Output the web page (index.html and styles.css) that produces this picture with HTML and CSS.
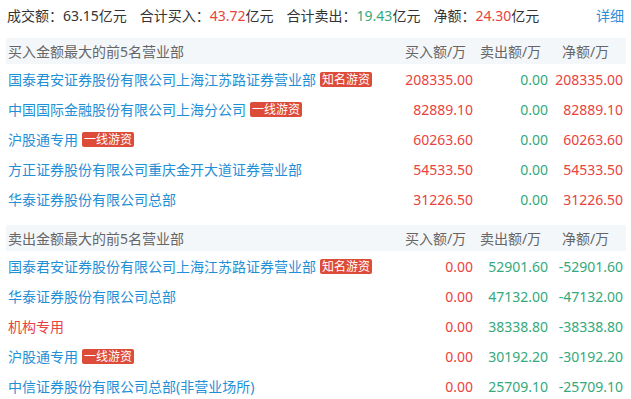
FILE: index.html
```html
<!DOCTYPE html>
<html lang="zh">
<head>
<meta charset="utf-8">
<link rel="stylesheet" href="styles.css">
</head>
<body>
<div class="page">
  <div class="summary">
    <span class="item">成交额：<span class="val">63.15</span>亿元</span>
    <span class="item">合计买入：<span class="red">43.72</span>亿元</span>
    <span class="item">合计卖出：<span class="green">19.43</span>亿元</span>
    <span class="item">净额：<span class="red">24.30</span>亿元</span>
    <a class="detail">详细</a>
  </div>

  <div class="section">
    <div class="row head">
      <div class="name">买入金额最大的前5名营业部</div>
      <div class="col">买入额/万</div>
      <div class="col">卖出额/万</div>
      <div class="col">净额/万</div>
    </div>
    <div class="row">
      <div class="name blue">国泰君安证券股份有限公司上海江苏路证券营业部<span class="tag">知名游资</span></div>
      <div class="num red">208335.00</div>
      <div class="num green">0.00</div>
      <div class="num red">208335.00</div>
    </div>
    <div class="row">
      <div class="name blue">中国国际金融股份有限公司上海分公司<span class="tag">一线游资</span></div>
      <div class="num red">82889.10</div>
      <div class="num green">0.00</div>
      <div class="num red">82889.10</div>
    </div>
    <div class="row">
      <div class="name blue">沪股通专用<span class="tag">一线游资</span></div>
      <div class="num red">60263.60</div>
      <div class="num green">0.00</div>
      <div class="num red">60263.60</div>
    </div>
    <div class="row">
      <div class="name blue">方正证券股份有限公司重庆金开大道证券营业部</div>
      <div class="num red">54533.50</div>
      <div class="num green">0.00</div>
      <div class="num red">54533.50</div>
    </div>
    <div class="row">
      <div class="name blue">华泰证券股份有限公司总部</div>
      <div class="num red">31226.50</div>
      <div class="num green">0.00</div>
      <div class="num red">31226.50</div>
    </div>
  </div>

  <div class="section">
    <div class="row head">
      <div class="name">卖出金额最大的前5名营业部</div>
      <div class="col">买入额/万</div>
      <div class="col">卖出额/万</div>
      <div class="col">净额/万</div>
    </div>
    <div class="row">
      <div class="name blue">国泰君安证券股份有限公司上海江苏路证券营业部<span class="tag">知名游资</span></div>
      <div class="num red">0.00</div>
      <div class="num green">52901.60</div>
      <div class="num green">-52901.60</div>
    </div>
    <div class="row">
      <div class="name blue">华泰证券股份有限公司总部</div>
      <div class="num red">0.00</div>
      <div class="num green">47132.00</div>
      <div class="num green">-47132.00</div>
    </div>
    <div class="row">
      <div class="name red">机构专用</div>
      <div class="num red">0.00</div>
      <div class="num green">38338.80</div>
      <div class="num green">-38338.80</div>
    </div>
    <div class="row">
      <div class="name blue">沪股通专用<span class="tag">一线游资</span></div>
      <div class="num red">0.00</div>
      <div class="num green">30192.20</div>
      <div class="num green">-30192.20</div>
    </div>
    <div class="row">
      <div class="name blue">中信证券股份有限公司总部(非营业场所)</div>
      <div class="num red">0.00</div>
      <div class="num green">25709.10</div>
      <div class="num green">-25709.10</div>
    </div>
  </div>
</div>
</body>
</html>
```

FILE: styles.css
```css
html, body {
  margin: 0;
  padding: 0;
  background: #fff;
}
body {
  font-family: "Noto Sans", "Noto Sans CJK SC", sans-serif;
  font-size: 14px;
  color: #333;
}
.page {
  padding: 0 5px 0 6px;
}
.summary {
  display: flex;
  align-items: center;
  height: 29px;
  padding-left: 1px;
  padding-right: 2px;
}
.summary .item {
  margin-right: 13px;
}
.summary .detail {
  margin-left: auto;
  color: #2b8fd8;
  cursor: pointer;
}
.section {
  margin-top: 9px;
}
.section + .section {
  margin-top: 11px;
}
.row {
  display: grid;
  grid-template-columns: 1fr 75px 75px 75px;
  align-items: center;
  height: 30px;
  padding: 0 3px 0 2px;
}
.row.head {
  height: 26px;
  background: #f4f7fa;
  color: #666;
}
.name {
  white-space: nowrap;
  display: flex;
  align-items: center;
}
.col {
  text-align: center;
}
.num {
  text-align: right;
}
.blue { color: #1f8fd6; }
.red { color: #e8433e; }
.green { color: #34a97c; }
.tag {
  display: inline-block;
  margin-left: 4px;
  padding: 0 2px;
  background: #dd4b39;
  color: #fff;
  font-size: 12px;
  line-height: 15px;
  border-radius: 2px;
}
```
